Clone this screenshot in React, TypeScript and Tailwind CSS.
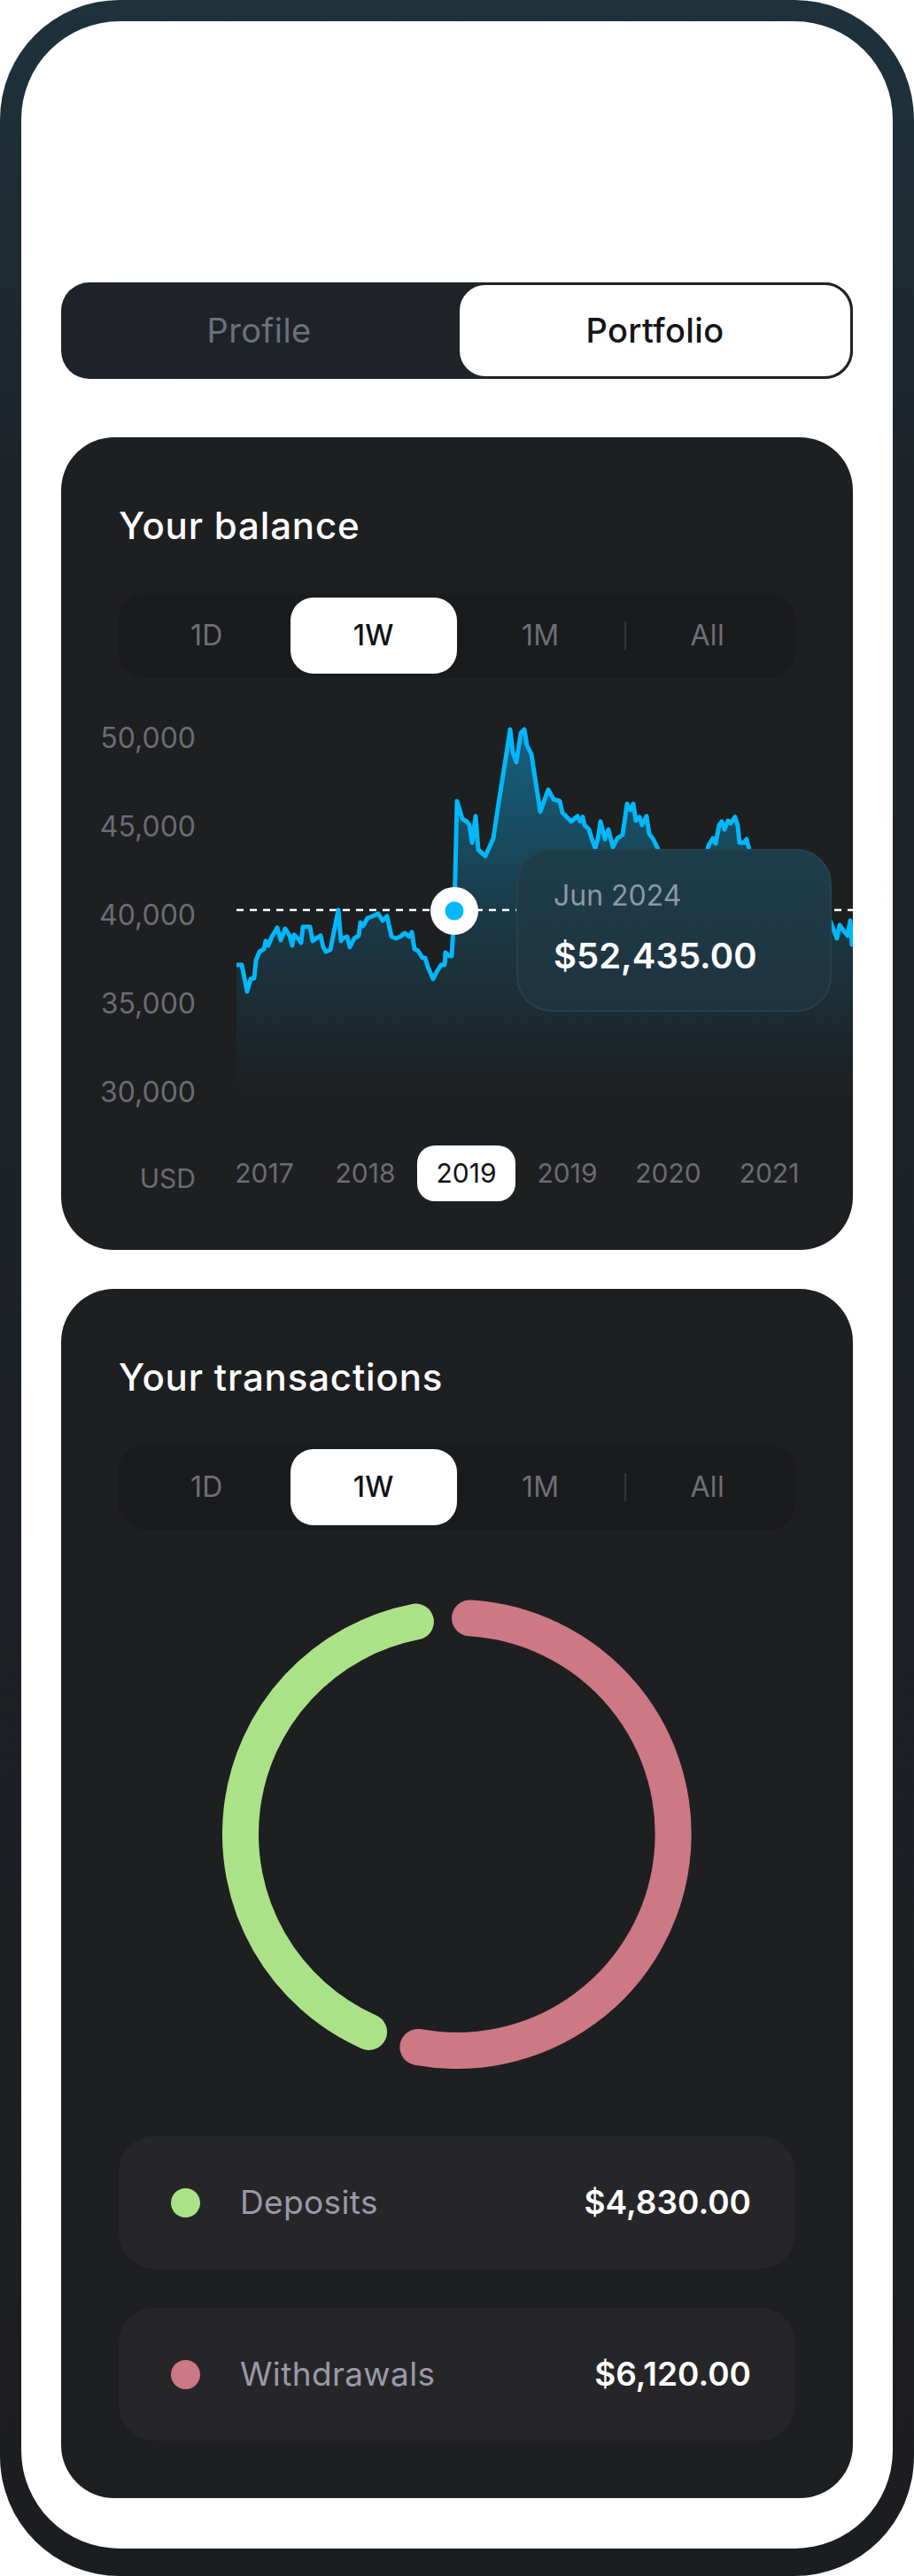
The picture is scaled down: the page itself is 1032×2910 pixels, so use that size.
import React from "react";

const periods = ["1D", "1W", "1M", "All"];
const years = ["2017", "2018", "2019", "2019", "2020", "2021"];
const yLabels = ["50,000", "45,000", "40,000", "35,000", "30,000"];

// balance line, page coords (chart svg is shifted by -267,-780)
const linePoints: [number, number][] = [
  [267, 1090], [273, 1090], [279, 1120], [283, 1106], [287, 1105], [289, 1085], [293, 1075],
  [298, 1072], [300, 1063], [303, 1068], [307, 1058], [313, 1048], [317, 1062], [322, 1049],
  [327, 1057], [330, 1068], [332, 1056], [338, 1062], [340, 1065], [342, 1047], [350, 1047],
  [353, 1063], [357, 1060], [362, 1057], [365, 1070], [368, 1075], [373, 1073], [382, 1028],
  [385, 1063], [387, 1060], [392, 1058], [395, 1070], [400, 1060], [405, 1057], [407, 1042],
  [410, 1046], [415, 1037], [418, 1036], [423, 1034], [427, 1032], [432, 1040], [437, 1035],
  [442, 1058], [447, 1060], [452, 1058], [457, 1054], [462, 1058], [465, 1053], [468, 1072],
  [472, 1074], [477, 1082], [480, 1082], [483, 1092], [489, 1106], [493, 1098], [498, 1090],
  [502, 1090], [503, 1076], [507, 1080], [510, 1080], [513, 1030], [516, 905], [522, 925],
  [527, 928], [530, 932], [533, 952], [537, 922], [540, 960], [548, 967], [557, 947],
  [563, 907], [570, 863], [576, 824], [579, 850], [583, 861], [588, 828], [592, 824],
  [595, 842], [600, 852], [610, 917], [619, 892], [625, 903], [632, 905], [635, 918],
  [640, 923], [645, 928], [652, 922], [655, 928], [658, 923], [660, 932], [665, 937],
  [668, 947], [672, 958], [675, 948], [678, 928], [683, 948], [687, 937], [692, 957],
  [697, 947], [703, 943], [708, 908], [712, 915], [715, 908], [718, 927], [722, 923],
  [725, 932], [730, 922], [733, 942], [737, 947], [742, 957], [746, 965], [755, 975],
  [765, 985], [775, 980], [785, 990], [795, 975], [800, 955], [805, 947], [808, 953],
  [812, 932], [815, 928], [818, 937], [822, 927], [825, 930], [830, 923], [833, 933],
  [835, 952], [840, 952], [843, 948], [846, 960], [860, 975], [880, 990], [900, 1000],
  [920, 1010], [935, 1035], [940, 1047], [945, 1060], [948, 1045], [953, 1052], [957, 1057],
  [960, 1040], [962, 1067], [966, 1060],
];

function PeriodTabs() {
  return (
    <div className="grid h-[96px] grid-cols-4 rounded-[30px] bg-[#1a1b1d] p-[5px]">
      {periods.map((p, i) => (
        <div
          key={p}
          className={`relative flex items-center justify-center text-[32px] tracking-[0.01em] ${
            i === 1 ? "rounded-[26px] bg-white font-medium text-[#111214]" : "text-[#6e6f76]"
          }`}
        >
          {i === 3 && <span className="absolute left-0 top-1/2 h-[32px] w-[2px] -translate-y-1/2 bg-[#34353a]" />}
          {p}
        </div>
      ))}
    </div>
  );
}

function BalanceChart() {
  const pts = linePoints.map(([x, y]) => `${x - 267},${y - 780}`).join(" ");
  const area = `M0,500 L${pts.split(" ").join(" L")} L700,310 L700,500 Z`;

  return (
    <div className="relative h-[500px] w-[696px]">
      <svg width="696" height="500" viewBox="0 0 696 500" className="block">
        <defs>
          <linearGradient id="balFill" x1="0" y1="44" x2="0" y2="460" gradientUnits="userSpaceOnUse">
            <stop offset="0" stopColor="#0ab3f5" stopOpacity="0.45" />
            <stop offset="0.55" stopColor="#0ab3f5" stopOpacity="0.16" />
            <stop offset="1" stopColor="#0ab3f5" stopOpacity="0" />
          </linearGradient>
        </defs>
        <path d={area} fill="url(#balFill)" />
        <line x1="0" y1="248" x2="696" y2="248" stroke="#ffffff" strokeWidth="2.5" strokeDasharray="8 7" />
        <polyline points={pts} fill="none" stroke="#02b7fb" strokeWidth="5" strokeLinejoin="round" strokeLinecap="round" />
        <circle cx="246" cy="249" r="27" fill="#ffffff" />
        <circle cx="246" cy="249" r="10.5" fill="#02b7fb" />
      </svg>

      {/* tooltip */}
      <div className="absolute left-[316px] top-[179px] h-[184px] w-[356px] rounded-[40px] border-2 border-[#28404b] bg-gradient-to-b from-[#1d3d4c] to-[#1f333e] pl-[40px] pt-[32px]">
        <p className="text-[32px] leading-[38px] text-[#8b98a4]">Jun 2024</p>
        <p className="mt-[25px] text-[40px] font-semibold leading-[48px] text-white">$52,435.00</p>
      </div>
    </div>
  );
}

function Donut() {
  return (
    <svg width="530" height="530" viewBox="0 0 530 530" className="mx-auto block">
      <path
        d="M165.6,488.4 A244.5,244.5 0 0 1 218.4,25"
        fill="none"
        stroke="#abe288"
        strokeWidth="41"
        strokeLinecap="round"
      />
      <path
        d="M279.5,20.9 A244.5,244.5 0 1 1 220.9,505.5"
        fill="none"
        stroke="#cc7885"
        strokeWidth="41"
        strokeLinecap="round"
      />
    </svg>
  );
}

function LegendRow({ color, label, value }: { color: string; label: string; value: string }) {
  return (
    <div className="flex h-[150px] items-center rounded-[40px] bg-[#262628] pl-[59px] pr-[50px]">
      <span className={`h-[33px] w-[33px] rounded-full ${color}`} />
      <span className="ml-[45px] text-[37px] tracking-[0.01em] text-[#9a99a8]">{label}</span>
      <span className="ml-auto text-[37px] font-semibold text-white">{value}</span>
    </div>
  );
}

export default function App() {
  return (
    <div className="min-h-[2910px] w-[1032px] bg-white font-[Inter,sans-serif]">
      <div className="rounded-[135px] bg-[linear-gradient(180deg,#1e323c_0%,#1d252b_18%,#1c1d20_100%)] px-[24px] pb-[31px] pt-[24px]">
        <div className="rounded-[111px] bg-white px-[45px] pb-[57px] pt-[295px]">
          {/* Profile / Portfolio toggle */}
          <div className="grid h-[109px] grid-cols-2 rounded-[32px] bg-gradient-to-r from-[#1e2329] to-[#212327]">
            <div className="flex items-center justify-center text-[38px] tracking-[0.01em] text-[#6c7079]">Profile</div>
            <div className="flex items-center justify-center rounded-[32px] border-[3px] border-[#1f2328] bg-white text-[38px] font-medium tracking-[0.01em] text-[#141518]">
              Portfolio
            </div>
          </div>

          {/* Balance card */}
          <div className="mt-[66px] overflow-hidden rounded-[60px] bg-[#1e1f21] pb-[55px] pt-[75px]">
            <div className="px-[65px]">
              <h2 className="text-[42px] font-medium leading-[49px] tracking-[0.02em] text-white">Your balance</h2>
              <div className="mt-[52px]">
                <PeriodTabs />
              </div>
            </div>

            <div className="mt-[14px] flex h-[500px]">
              <div className="flex w-[152px] flex-col">
                {yLabels.map((l) => (
                  <div key={l} className="flex h-[100px] items-center justify-end pt-[8px] text-[32px] text-[#6b6c73]">
                    {l}
                  </div>
                ))}
              </div>
              <div className="ml-[46px]">
                <BalanceChart />
              </div>
            </div>

            <div className="mt-[14px] flex items-center">
              <div className="w-[152px] pt-[12px] text-right text-[30px] text-[#6b6c73]">USD</div>
              <div className="ml-[22px] flex gap-[3px]">
                {years.map((y, i) => (
                  <div
                    key={i}
                    className={`flex h-[63px] w-[111px] items-center justify-center rounded-[20px] text-[30px] ${
                      i === 2 ? "bg-white text-[#111214]" : "text-[#6b6c73]"
                    }`}
                  >
                    {y}
                  </div>
                ))}
              </div>
            </div>
          </div>

          {/* Transactions card */}
          <div className="mt-[44px] rounded-[60px] bg-[#1e1f21] px-[65px] pb-[65px] pt-[75px]">
            <h2 className="text-[42px] font-medium leading-[49px] tracking-[0.02em] text-white">Your transactions</h2>
            <div className="mt-[52px]">
              <PeriodTabs />
            </div>
            <div className="mt-[79px]">
              <Donut />
            </div>
            <div className="mt-[76px] flex flex-col gap-[44px]">
              <LegendRow color="bg-[#abe288]" label="Deposits" value="$4,830.00" />
              <LegendRow color="bg-[#cc7885]" label="Withdrawals" value="$6,120.00" />
            </div>
          </div>
        </div>
      </div>
    </div>
  );
}
